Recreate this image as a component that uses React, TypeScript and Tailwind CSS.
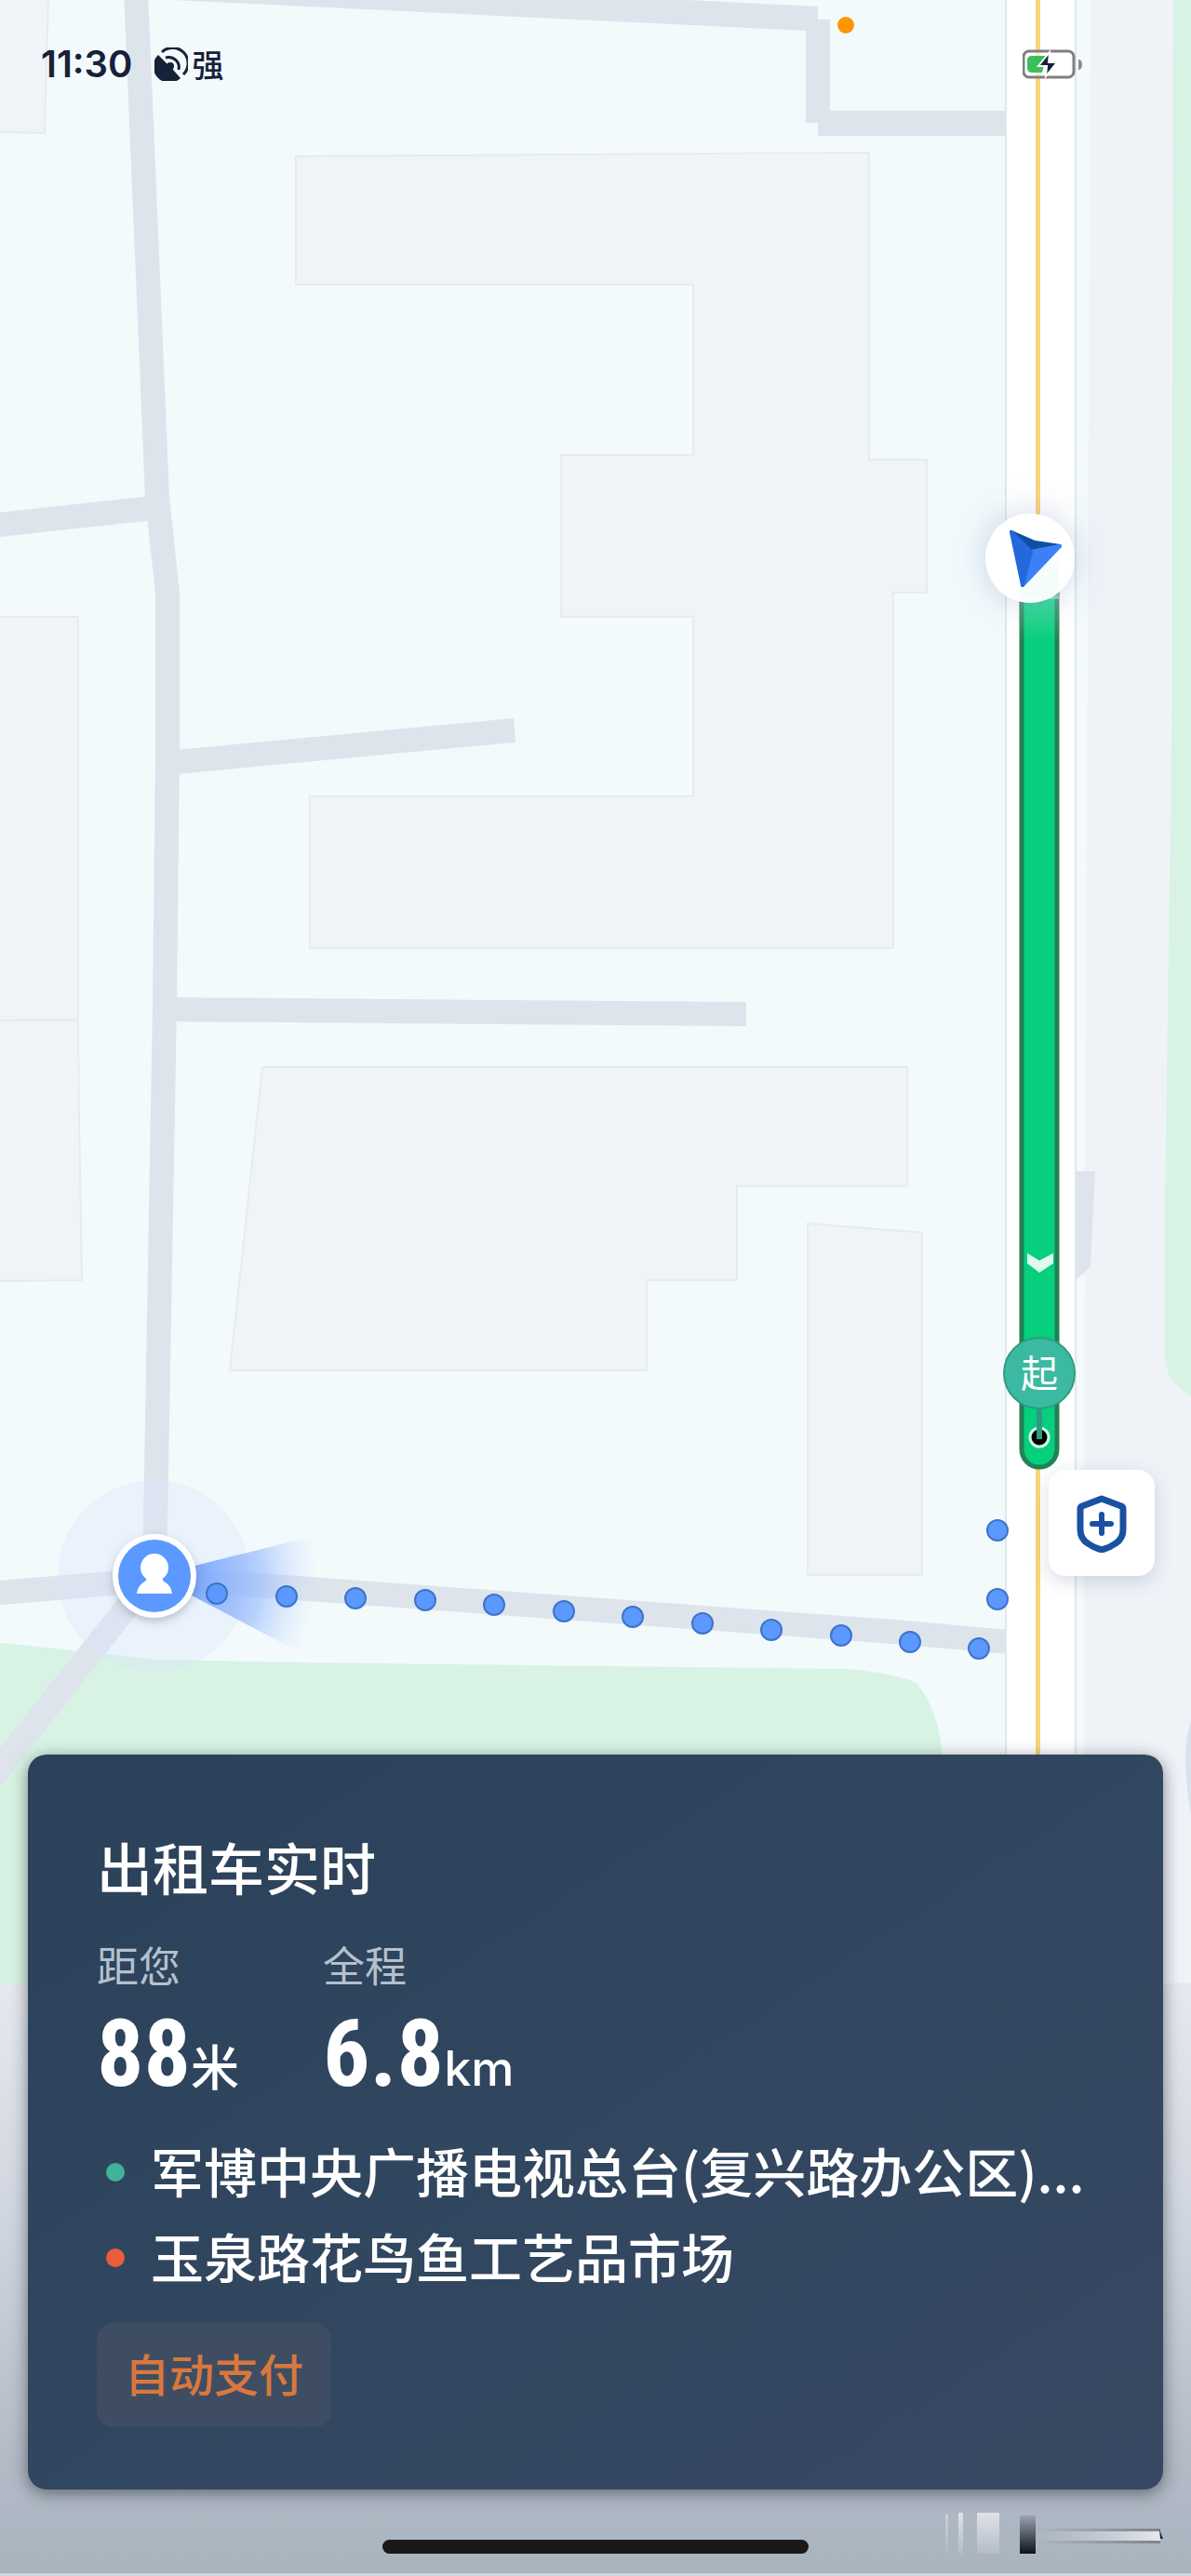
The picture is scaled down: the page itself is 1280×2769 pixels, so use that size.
import React from 'react';

type Point = [number, number];

const walkingDots: Point[] = [
  [233, 1713],
  [308, 1716],
  [382, 1718],
  [457, 1720],
  [531, 1725],
  [606, 1732],
  [680, 1738],
  [755, 1745],
  [829, 1752],
  [904, 1758],
  [978, 1765],
  [1052, 1772],
  [1072, 1719],
  [1072, 1645],
];

const buildings = [
  '-5,-5 52,-5 48,143 -5,142',
  '-5,663 84,663 84,1096 -5,1097',
  '-5,1097 84,1096 85,1200 88,1376 -5,1377',
  '318,168 934,164 934,494 996,494 996,637 960,637 960,1019 333,1019 333,856 745,856 745,663 603,663 603,489 745,489 745,306 318,306',
  '282,1147 975,1147 975,1275 792,1275 792,1376 695,1376 695,1473 247,1473',
  '868,1315 991,1325 991,1693 868,1693',
];

const roads = [
  'M146 -10 L169 535 L180 638 L180 810 L177 1080 L166 1694',
  'M-10 565 L165 546',
  'M180 820 L553 785',
  'M177 1085 L802 1090',
  'M-10 1713 L166 1698 L250 1702 L400 1713 L960 1754 L1085 1765',
  'M166 1690 L-20 1925',
];

const stats = [
  { label: '距您', value: '88', unit: '米' },
  { label: '全程', value: '6.8', unit: 'km' },
];

const stops = [
  { name: '军博中央广播电视总台(复兴路办公区)...', dot: 'bg-[#3fb298]' },
  { name: '玉泉路花鸟鱼工艺品市场', dot: 'bg-[#e95d3b]' },
];

const MapView: React.FC = () => (
  <svg
    className="absolute inset-0 h-full w-full"
    viewBox="0 0 1280 2769"
    preserveAspectRatio="xMidYMid slice"
    aria-hidden="true"
  >
    <defs>
      <radialGradient id="cone" gradientUnits="userSpaceOnUse" cx="166" cy="1694" r="176">
        <stop offset="0.25" stopColor="#78a6fb" stopOpacity="0.95" />
        <stop offset="0.65" stopColor="#8fb5fd" stopOpacity="0.6" />
        <stop offset="1" stopColor="#c3d8ff" stopOpacity="0" />
      </radialGradient>
      <linearGradient id="fade" x1="0" y1="0" x2="0" y2="1">
        <stop offset="0" stopColor="#e6e9ef" />
        <stop offset="0.45" stopColor="#cdd3dd" />
        <stop offset="0.8" stopColor="#b3bbc7" />
        <stop offset="1" stopColor="#a9b4bf" />
      </linearGradient>
      <linearGradient id="routeTop" x1="0" y1="0" x2="0" y2="1">
        <stop offset="0" stopColor="#ffffff" stopOpacity="0.25" />
        <stop offset="1" stopColor="#ffffff" stopOpacity="0" />
      </linearGradient>
      <filter id="softShadow" x="-60%" y="-60%" width="220%" height="220%">
        <feDropShadow dx="0" dy="4" stdDeviation="5" floodColor="#3c4658" floodOpacity="0.3" />
      </filter>
      <filter id="carShadow" x="-100%" y="-100%" width="300%" height="300%">
        <feDropShadow dx="0" dy="0" stdDeviation="18" floodColor="#5a78b4" floodOpacity="0.3" />
      </filter>
    </defs>

    <rect width="1280" height="2769" fill="#f3fafc" />

    {/* Blocks east of the avenue */}
    <path d="M1172 0 L1280 0 L1280 2140 L1165 2140 L1165 1500 Z" fill="#eff3f8" />
    <path d="M1261 0 L1280 0 L1280 1502 L1263 1487 Q1252 1477 1252 1455 L1252 1300 L1259 800 Z" fill="#d8f3e4" />
    <path d="M1280 1850 Q1268 1885 1280 1950 Z" fill="#dbe1ea" />

    {/* Park */}
    <path
      d="M0 1766 L51 1771 L167 1784 L327 1787 L910 1794 Q960 1798 985 1809 Q1010 1840 1013 1890 L1013 2140 L0 2140 Z"
      fill="#d8f3e4"
    />

    <g fill="#f0f4f8" stroke="#e7ebef" strokeWidth="2">
      {buildings.map((points) => (
        <polygon key={points} points={points} />
      ))}
    </g>

    <g fill="none" stroke="#dee4ec" strokeWidth="26" strokeLinejoin="round">
      {roads.map((d) => (
        <path key={d} d={d} />
      ))}
    </g>
    <path
      d="M186 0 L739 0 L879 7 L879 21 L892 21 L892 119 L1082 119 L1082 146 L879 146 L879 132 L866 132 L866 33 Z"
      fill="#dee4ec"
    />
    <path d="M1156 1259 L1177 1259 L1172 1362 L1156 1376 Z" fill="#dee4ec" />

    {/* Avenue */}
    <rect x="1081" y="-5" width="75" height="2150" fill="#ffffff" stroke="#e2e7ea" strokeWidth="2" />
    <rect x="1113" width="5" height="2140" fill="#f9d57a" />

    <rect y="2132" width="1280" height="634" fill="url(#fade)" />
    <rect y="2766" width="1280" height="3" fill="#cbd5e0" />

    {/* Route */}
    <rect x="1098" y="600" width="38" height="977" rx="19" fill="#06cf7d" stroke="#218255" strokeWidth="5" />
    <rect x="1096" y="640" width="43" height="50" fill="url(#routeTop)" />
    <path d="M1104 1347 L1117 1355 L1132 1347 V1358 L1117 1368 L1104 1358 Z" fill="#e0faee" />

    {/* Pick-up pin */}
    <circle cx="1117" cy="1545" r="10" fill="#000000" stroke="#d2fbe6" strokeWidth="3" />
    <rect x="1114" y="1510" width="6" height="37" fill="#2c9b80" />
    <circle cx="1117" cy="1476" r="38" fill="#3cbaa1" stroke="#2f9b82" strokeWidth="2" />
    <text x="1117" y="1491" textAnchor="middle" fill="#ffffff" className="font-['Noto_Sans_CJK_SC',sans-serif] text-[40px]">
      起
    </text>

    {/* Car */}
    <circle cx="1107" cy="600" r="48" fill="#ffffff" filter="url(#carShadow)" />
    <rect x="1096" y="604" width="42" height="40" fill="#e4fbf1" opacity="0.4" />
    <g strokeLinejoin="round" strokeWidth="4">
      <path d="M1087 572 L1108 593 L1139 587 L1112 583 Z" fill="#0f4fa3" stroke="#0f4fa3" />
      <path d="M1108 593 L1139 587 L1099 629 Z" fill="#3c80f7" stroke="#3c80f7" />
      <path d="M1087 572 L1108 593 L1099 629 Z" fill="#2468de" stroke="#2468de" />
    </g>

    {/* Passenger */}
    <circle cx="165" cy="1694" r="103" fill="#dbe4fb" opacity="0.35" />
    <path d="M166 1694 L345 1649 L345 1788 Z" fill="url(#cone)" />
    {walkingDots.map(([cx, cy]) => (
      <circle key={`${cx}-${cy}`} cx={cx} cy={cy} r="11" fill="#5b98ff" stroke="#3f73c8" strokeWidth="2" />
    ))}
    <circle cx="166" cy="1694" r="45" fill="#ffffff" filter="url(#softShadow)" />
    <circle cx="166" cy="1694" r="39" fill="#5b98ff" />
    <circle cx="166" cy="1685" r="15" fill="#ffffff" />
    <path
      d="M158 1695 H174 Q174 1699 178 1701 Q184 1705 185 1713 H147 Q148 1705 154 1701 Q158 1699 158 1695 Z"
      fill="#ffffff"
    />
  </svg>
);

const SignalIcon: React.FC = () => (
  <svg className="h-9 w-9" viewBox="0 0 36 36" fill="none" aria-hidden="true">
    <path d="M4 8 L14 18 A5 5 0 0 1 20 24 L28 33 A17 17 0 0 1 4 8 Z" fill="#16213a" />
    <circle cx="17" cy="20" r="4" fill="#16213a" />
    <path d="M8 5 A16 16 0 0 1 31 29" stroke="#16213a" strokeWidth="3" />
    <path d="M12 11 A11 11 0 0 1 26 24" stroke="#16213a" strokeWidth="3" />
  </svg>
);

const BatteryIcon: React.FC = () => (
  <svg className="h-8 w-16" viewBox="0 0 64 32" aria-hidden="true">
    <rect x="1" y="2" width="54" height="28" rx="6" fill="#ffffff" fillOpacity="0.6" stroke="#7f7f81" strokeWidth="3" />
    <path d="M5 12 Q5 7 10 7 H26 L21 25 H10 Q5 25 5 20 Z" fill="#3bbf5c" />
    <path d="M60 11 Q64 11 64 16 Q64 22 60 22 Z" fill="#8c8d90" />
    <path d="M29 3 L17 18 H26 L25 29 L37 14 H28 Z" fill="#16213a" stroke="#ffffff" strokeWidth="2" />
  </svg>
);

// Faded stamp in the bottom corner
const CornerMark: React.FC = () => (
  <svg className="absolute right-[30px] bottom-6 h-11 w-[236px]" viewBox="0 0 236 44" aria-hidden="true">
    <defs>
      <linearGradient id="markLight" x1="0" y1="0" x2="0" y2="1">
        <stop offset="0" stopColor="#dfe2e9" />
        <stop offset="1" stopColor="#b4bcc8" />
      </linearGradient>
      <linearGradient id="markDark" x1="0" y1="0" x2="0" y2="1">
        <stop offset="0" stopColor="#9aa3b0" />
        <stop offset="1" stopColor="#10131a" />
      </linearGradient>
      <linearGradient id="markLine" x1="0" y1="0" x2="1" y2="0">
        <stop offset="0" stopColor="#c6ccd4" stopOpacity="0" />
        <stop offset="1" stopColor="#e6e8ec" />
      </linearGradient>
      <linearGradient id="markEdge" x1="0" y1="0" x2="1" y2="0">
        <stop offset="0" stopColor="#7e858f" stopOpacity="0" />
        <stop offset="1" stopColor="#7e858f" />
      </linearGradient>
    </defs>
    <rect x="2" y="2" width="3" height="42" fill="url(#markLight)" opacity="0.6" />
    <rect x="16" y="0" width="5" height="44" fill="url(#markLight)" />
    <rect x="36" y="0" width="24" height="44" fill="url(#markLight)" />
    <rect x="82" y="3" width="17" height="41" fill="url(#markDark)" />
    <rect x="99" y="17" width="134" height="3" fill="url(#markEdge)" />
    <rect x="99" y="20" width="134" height="10" fill="url(#markLine)" />
    <rect x="99" y="30" width="134" height="3" fill="url(#markEdge)" />
    <path d="M232 18 L236 28 H233 Z" fill="#20242b" />
  </svg>
);

const StatusBar: React.FC = () => (
  <header className="relative flex h-[138px] items-center justify-between pr-[117px] pl-11 text-[#16213a]">
    <div className="flex items-center">
      <span className="font-['Inter',sans-serif] text-[40px] font-semibold">11:30</span>
      <div className="ml-6 flex items-center gap-1">
        <SignalIcon />
        <span className="text-[34px] leading-10 font-medium">强</span>
      </div>
    </div>
    <span className="absolute top-[18px] right-[362px] h-[18px] w-[18px] rounded-full bg-[#ff9500]" />
    <BatteryIcon />
  </header>
);

const TripCard: React.FC = () => (
  <section className="mx-[30px] rounded-[20px] bg-linear-to-br from-[#2b415a] via-[#31475f] to-[#384862] px-[74px] pt-[84px] pb-[67px] text-white shadow-[0_4px_18px_rgba(30,36,48,0.55)]">
    <h1 className="text-[60px] leading-[72px] font-medium">出租车实时</h1>

    <dl className="mt-[42px] grid grid-cols-[243px_1fr]">
      {stats.map((stat) => (
        <div key={stat.label}>
          <dt className="text-[45px] leading-[56px] text-[#b6c0cc]">{stat.label}</dt>
          <dd className="mt-2 mb-[22px] flex items-baseline">
            <span className="font-['Roboto_Condensed','Open_Sans_Condensed','Roboto',sans-serif] text-[100px] leading-[119px] font-bold">
              {stat.value}
            </span>
            <span className="font-['Inter','Noto_Sans_CJK_SC',sans-serif] text-[52px] leading-[56px] font-medium">
              {stat.unit}
            </span>
          </dd>
        </div>
      ))}
    </dl>

    <ul>
      {stops.map((stop) => (
        <li key={stop.name} className="flex h-[92px] items-center gap-7 pl-2.5">
          <span className={`h-5 w-5 shrink-0 rounded-full ${stop.dot}`} />
          <span className="truncate pb-1.5 text-[57px] leading-[80px] font-medium">{stop.name}</span>
        </li>
      ))}
    </ul>

    <div className="mt-6 flex">
      <span className="rounded-[18px] bg-[#3f4d63] px-[30px] pt-[21px] pb-[27px] text-[48px] leading-[64px] font-medium text-[#d8783e]">
        自动支付
      </span>
    </div>
  </section>
);

const App: React.FC = () => (
  <main
    lang="zh-CN"
    className="relative flex min-h-screen flex-col overflow-hidden bg-[#f3fafc] font-['Noto_Sans_CJK_SC',sans-serif]"
  >
    <MapView />
    <div className="relative flex flex-1 flex-col">
      <StatusBar />

      <button
        type="button"
        aria-label="安全中心"
        className="mt-auto mr-[39px] mb-[192px] flex h-[114px] w-[114px] items-center justify-center self-end rounded-[18px] bg-white shadow-[0_6px_20px_rgba(60,80,130,0.2)]"
      >
        <svg className="h-16 w-14" viewBox="0 0 56 64" fill="none" stroke="#1b51a3" strokeLinejoin="round" aria-hidden="true">
          <path
            d="M28 6 L49 14 Q51 15 51 17 V39 Q51 49 43 54 Q36 59 28 61 Q20 59 13 54 Q5 49 5 39 V17 Q5 15 7 14 Z"
            strokeWidth="7"
          />
          <path d="M28 23 V43 M18 33 H38" strokeWidth="6" strokeLinecap="round" />
        </svg>
      </button>

      <TripCard />

      <footer className="relative flex justify-center pt-[54px] pb-6">
        <div className="h-[15px] w-[458px] rounded-full bg-[#1a1819]" />
        <CornerMark />
      </footer>
    </div>
  </main>
);

export default App;
